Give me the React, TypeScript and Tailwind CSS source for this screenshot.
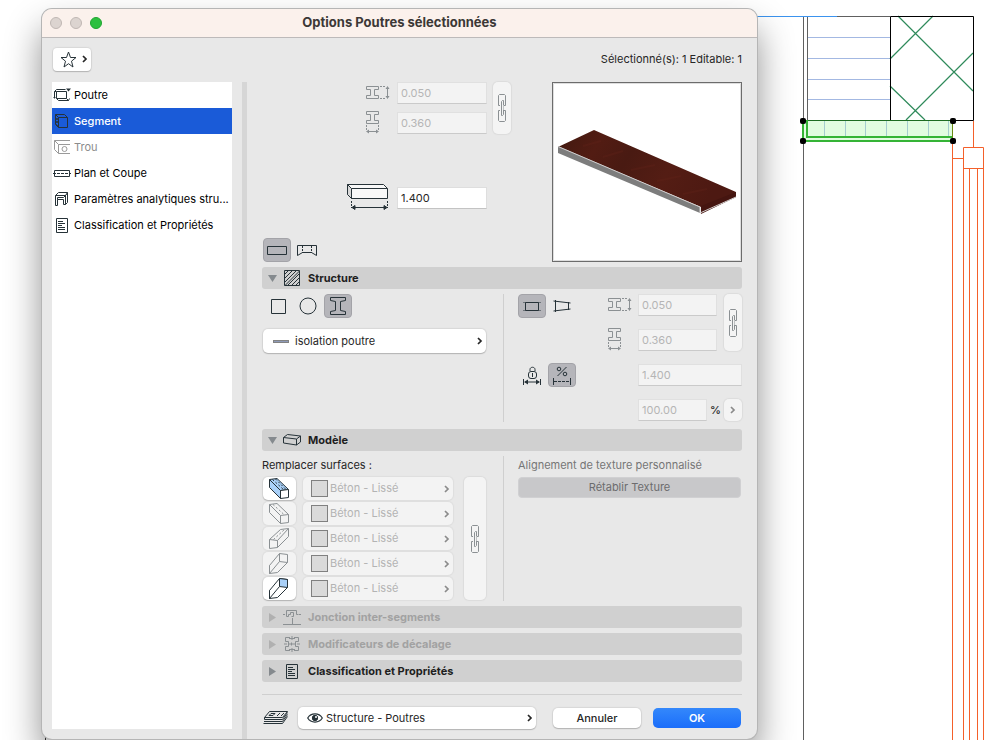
import type { ReactNode } from "react";

type IconProps = { w: number; h: number; className?: string; children: ReactNode };

function Icon({ w, h, className = "text-[#263238]", children }: IconProps) {
  return (
    <svg
      width={w}
      height={h}
      viewBox={`0 0 ${w} ${h}`}
      fill="none"
      stroke="currentColor"
      className={`shrink-0 ${className}`}
      aria-hidden="true"
    >
      {children}
    </svg>
  );
}

const muted = "text-[#8b9093]";

/* Sidebar icons */
const beamIcon = (
  <Icon w={18} h={14}>
    <path d="M1.500 10.500v-7l2-2h9M3.500 3.500h10v7h-10zM1.500 3.500h2M.5 9.500h2M3.500 10.500l2 2h10l1-2M13.500 10.500l2 2" />
    <path d="M13 .5h5l-2.500 3z" fill="currentColor" stroke="none" />
  </Icon>
);

const segmentIcon = (
  <Icon w={18} h={14}>
    <path d="M2.500 .5h9l3 3v10h-9l-3-3zM2.500 .5l3 3h9M5.500 3.500v10" />
    <path d="M3 4l2 2M3 7l2 2M3 10l2 2M3 6l2-2M3 9l2-2" strokeWidth=".8" />
  </Icon>
);

const holeIcon = (
  <Icon w={18} h={14} className="text-[#9a9a9a]">
    <path d="M17 .5H1.500v9l4 4H17M1.500 .5l4 4v9M5.500 4.500H17" />
    <circle cx="11.500" cy="9" r="2.500" />
  </Icon>
);

const planIcon = (
  <Icon w={18} h={14}>
    <path d="M1.500 4.500h15v6h-15z" />
    <path d="M0 7.500h18" strokeDasharray="3 1" />
  </Icon>
);

const frameIcon = (
  <Icon w={18} h={14}>
    <path d="M2.500 13.500v-10l3-3h9v10l-2 2v-9h-10M4.500 13.500v-6h6v5h2M4.500 5.500h6l3-3M2.500 13.500h2M14.500 .5l-2 3M4.500 7.500v-2" />
  </Icon>
);

const documentIcon = (
  <Icon w={18} h={15}>
    <path d="M3.500 .5h11v14h-11zM5 3.500h5M5 5.500h7M5 7.500h4M5 9.500h7M5 11.500h7" />
  </Icon>
);

/* Profile dimension icons */
function ProfileHeightIcon() {
  return (
    <Icon w={24} h={16} className={muted}>
      <path d="M.5 1.500h12v3h-4v6h4v3H.5v-3h4v-6h-4z" />
      <path d="M14 1.500h6M14 13.500h6" strokeDasharray="2 1" />
      <path d="M21.500 3v9" />
      <path d="M21.500 1l2 3h-4zM21.500 14l2-3h-4z" fill="currentColor" stroke="none" />
    </Icon>
  );
}

function ProfileWidthIcon() {
  return (
    <Icon w={24} h={24} className={muted}>
      <path d="M.5 .5h12v3h-4v6h4v3H.5v-3h4v-6h-4z" />
      <path d="M.5 14v6M12.500 14v6" strokeDasharray="2 1" />
      <path d="M2 20.500h9" />
      <path d="M0 20.500l3-2v4zM13 20.500l-3-2v4z" fill="currentColor" stroke="none" />
    </Icon>
  );
}

function BeamLengthIcon() {
  return (
    <Icon w={42} h={27}>
      <path d="M.5 .5h36l4 4v10h-36l-4-4z" fill="#f8f8f8" />
      <path d="M.5 .5l4 4h36M4.500 4.500v10" />
      <path d="M.5 .5l4 4v10l-4-4z" fill="#d8d8d8" />
      <path d="M4.500 17v7M40.500 17v7" strokeDasharray="2 1" />
      <path d="M6 23.500h33" />
      <path d="M5 23.500l3-2v4zM40 23.500l-3-2v4z" fill="currentColor" />
    </Icon>
  );
}

function ChainIcon() {
  return (
    <Icon w={8} h={28} className={muted}>
      <path d="M2 11.500H.5v-10l1-1h5l1 1v10H6M2 16.500H.5v10l1 1h5l1-1v-10H6" />
      <path d="M3.500 12V7.500l1-1h1v5M3.500 16.500v5h1l1-1V16M3.500 9v10" />
      <path d="M5.500 12.500v3" strokeDasharray="1 1" />
    </Icon>
  );
}

function Chevron({ className = "text-[#262626]" }: { className?: string }) {
  return (
    <Icon w={6} h={8} className={`pointer-events-none ${className}`}>
      <path d="M1 1l3 3-3 3" strokeWidth="1.700" />
    </Icon>
  );
}

/* Surface icons: highlighted face is blue when the override is active */
const surfaceIcons = [
  <Icon w={21} h={21} key="top">
    <path d="M.5 1.500L8 .5l11.500 11-8 1v8L.5 9.500z" fill="#a9d0f8" />
    <path d="M11.500 12.500l8-1v8l-8 1z" fill="#fff" />
    <path d="M.5 1.500l11 11" />
    <path d="M3.500 1.500l11 10M6.500 1l10 10" strokeDasharray="2 2" />
  </Icon>,
  <Icon w={21} h={21} key="left" className={muted}>
    <path d="M.5 1.500L8 .5l11.500 11v8l-8 1L.5 9.500zM.5 1.500l11 11v8M11.500 12.500l8-1" />
    <path d="M4 1.500l11 10" strokeDasharray="2 2" />
  </Icon>,
  <Icon w={21} h={21} key="right" className={muted}>
    <path d="M.5 11.500l11-10 8-1v8l-11 11-8 1zM.5 11.500l8 1v7M8.500 12.500l11-12" />
    <path d="M4.500 11.500l11-10" strokeDasharray="2 2" />
  </Icon>,
  <Icon w={21} h={21} key="end" className={muted}>
    <path d="M.5 12.500l10-12 8 1v8l-10 10-8 1zM10.500 .5v8l8 1M10.500 8.500l-10 12M.5 12.500v8" />
  </Icon>,
  <Icon w={21} h={21} key="bottom">
    <path d="M.5 12.500l10-12 8 1v8l-10 10-8 1z" fill="#fff" />
    <path d="M10.500 .5l8 1v8l-8-1z" fill="#a9d0f8" />
    <path d="M10.500 8.500l-10 12v-8" />
  </Icon>,
];

/* Form pieces */
function NumberField({ label, value, className, disabled = true }: { label: string; value: string; className: string; disabled?: boolean }) {
  return (
    <input
      type="text"
      aria-label={label}
      defaultValue={value}
      disabled={disabled}
      className={`h-[22px] border border-[#dedede] border-b-[#c3c3c3] bg-white px-[3px] text-[11px] text-[#262626] disabled:border-[#e0e0e0] disabled:border-b-[#cacaca] disabled:bg-[#f3f3f3] disabled:text-[#b5b5b5] ${className}`}
    />
  );
}

function LinkButton({ label, className }: { label: string; className: string }) {
  return (
    <button
      type="button"
      aria-label={label}
      disabled
      className={`flex items-center justify-center rounded-[5px] bg-[#f4f4f4] shadow-[0_0_1px_1px_#dcdcdc] ${className}`}
    >
      <ChainIcon />
    </button>
  );
}

function Toggle({ label, on, className = "w-7", children }: { label: string; on?: boolean; className?: string; children: ReactNode }) {
  return (
    <button
      type="button"
      aria-label={label}
      aria-pressed={!!on}
      className={`flex h-6 items-center justify-center rounded-[4px] ${on ? "border border-[#a3a3a8] bg-[#b5b5ba]" : ""} ${className}`}
    >
      {children}
    </button>
  );
}

function Picker({ label, value, lead, disabled, className }: { label: string; value: string; lead?: ReactNode; disabled?: boolean; className: string }) {
  return (
    <div
      className={`flex items-center rounded-[5px] ${
        disabled
          ? "bg-[#f3f3f3] pr-[3px] text-[#b3b3b3] shadow-[0_0_1px_1px_#dedede]"
          : "bg-white pr-[3px] text-[#262626] shadow-[0_1px_1px_#b4b4b4,0_0_1px_1px_#d8d8d8]"
      } ${className}`}
    >
      {lead}
      <select aria-label={label} disabled={disabled} className="min-w-0 flex-1 appearance-none bg-transparent text-[11px] opacity-100 outline-none">
        <option>{value}</option>
      </select>
      <Chevron className={disabled ? "text-[#8b8b8b]" : "text-[#262626]"} />
    </div>
  );
}

function SectionHeader({ title, icon, open, disabled }: { title: string; icon: ReactNode; open?: boolean; disabled?: boolean }) {
  return (
    <h2>
      <button
        type="button"
        aria-expanded={!!open}
        disabled={disabled}
        className={`flex h-[22px] w-full items-center rounded-[3px] bg-[#d0d0d0] pl-[6px] text-[11px] font-bold ${disabled ? "text-[#a2a2a2]" : "text-[#1e1e1e]"}`}
      >
        <Icon w={9} h={9} className={disabled ? "text-[#b0b0b0]" : "text-[#858a8e]"}>
          <path d={open ? "M0 1h9L4.500 8z" : "M1 0v9l7-4.500z"} fill="currentColor" stroke="none" />
        </Icon>
        <span className="mr-[7px] ml-[6px] flex w-[18px] justify-center">{icon}</span>
        {title}
      </button>
    </h2>
  );
}

const pages = [
  { name: "Poutre", icon: beamIcon },
  { name: "Segment", icon: segmentIcon },
  { name: "Trou", icon: holeIcon },
  { name: "Plan et Coupe", icon: planIcon },
  { name: "Paramètres analytiques stru...", icon: frameIcon },
  { name: "Classification et Propriétés", icon: documentIcon },
];

function Sidebar() {
  return (
    <nav className="mb-[10px] w-[180px] shrink-0 bg-white">
      <ul>
        {pages.map(({ name, icon }) => (
          <li key={name}>
            <button
              type="button"
              disabled={name === "Trou"}
              aria-current={name === "Segment" ? "page" : undefined}
              className="flex h-[26px] w-full items-center gap-[3px] pl-px text-left text-[11px] whitespace-nowrap text-black disabled:text-[#8c8c8c] aria-[current=page]:bg-[#1a5bd8] aria-[current=page]:font-medium aria-[current=page]:text-white"
            >
              {icon}
              {name}
            </button>
          </li>
        ))}
      </ul>
    </nav>
  );
}

function Preview() {
  return (
    <div className="h-[180px] w-[190px] shrink-0 border border-[#6c6c6c] bg-white">
      <svg width="188" height="178" viewBox="0 0 188 178" role="img" aria-label="Aperçu 3D">
        <defs>
          <linearGradient id="wood" x1="0" y1="0" x2="1" y2="0.300">
            <stop offset="0" stopColor="#41190f" />
            <stop offset=".25" stopColor="#521c13" />
            <stop offset=".45" stopColor="#491a12" />
            <stop offset=".7" stopColor="#541d14" />
            <stop offset="1" stopColor="#4d1912" />
          </linearGradient>
        </defs>
        <path d="M.5.5h187v177H.5z" fill="none" stroke="#dedede" />
        <path d="M5 64L41 47l142 62v5l-35 17v-7z" fill="url(#wood)" />
        <path d="M148 123l35-14v5l-35 16z" fill="#451510" />
        <path d="M5 63l142 61v6L5 70z" fill="#7d7d7d" />
        <path d="M5 63.500l142 60.500v6l36-16" fill="none" stroke="#d2cfcf" />
        <path d="M50 74l20-6M78 87l24-5M104 98l24-5M130 111l24-5M30 63l18-5" stroke="#64241a" strokeWidth="2" opacity=".3" />
      </svg>
    </div>
  );
}

function Geometry() {
  return (
    <section className="flex h-[185px]">
      <div className="flex h-[180px] flex-1 flex-col">
        <div className="flex justify-end gap-[6px] pr-[41px]">
          <div className="flex flex-col gap-2">
            <div className="flex h-[22px] items-center gap-[7px]">
              <ProfileHeightIcon />
              <NumberField label="Hauteur" value="0.050" className="w-[90px]" />
            </div>
            <div className="flex h-[22px] items-center gap-[7px]">
              <ProfileWidthIcon />
              <NumberField label="Largeur" value="0.360" className="w-[90px]" />
            </div>
          </div>
          <LinkButton label="Lier hauteur et largeur" className="w-[18px]" />
        </div>
        <div className="mt-[50px] flex items-center justify-end gap-2 pr-[65px]">
          <BeamLengthIcon />
          <NumberField label="Longueur" value="1.400" className="w-[90px]" disabled={false} />
        </div>
        <div className="mt-auto flex gap-0.5 pl-px">
          <Toggle label="Section uniforme" on>
            <Icon w={20} h={9}>
              <path d="M.5 .5h19v8H.5z" />
            </Icon>
          </Toggle>
          <Toggle label="Section variable">
            <Icon w={20} h={11}>
              <path d="M.5 10.500V.5h19v10M.5 10.500l5-3h9l5 3" />
              <path d="M5.500 1v7M14.500 1v7" strokeDasharray="2 1" />
            </Icon>
          </Toggle>
        </div>
      </div>
      <Preview />
    </section>
  );
}

function Structure() {
  return (
    <div className="flex h-[140px] pt-[5px] pb-[7px]">
      <div className="flex-1 border-r border-[#cfcfcf] pr-[17px]">
        <div className="flex gap-0.5 pl-[2px]">
          <Toggle label="Rectangulaire">
            <Icon w={15} h={15}>
              <path d="M.5 .5h14v14H.5z" />
            </Icon>
          </Toggle>
          <Toggle label="Circulaire">
            <Icon w={18} h={18}>
              <circle cx="9" cy="9" r="8" />
            </Icon>
          </Toggle>
          <Toggle label="Profil complexe" on>
            <Icon w={16} h={18}>
              <path d="M.5 .5h15v3l-5 1v9l5 1v3H.5v-3l5-1v-9l-5-1z" />
            </Icon>
          </Toggle>
        </div>
        <Picker
          label="Profil"
          value="isolation poutre"
          className="mt-[11px] ml-px h-6"
          lead={<span className="mr-[6px] ml-[10px] h-[3px] w-4 border border-[#828282] bg-[#8e9ab8]" />}
        />
      </div>
      <div className="flex w-[238px] shrink-0 justify-between pl-[14px]">
        <div className="flex flex-col gap-[45px]">
          <div className="flex gap-0.5">
            <Toggle label="Segment constant" on>
              <Icon w={18} h={11}>
                <path d="M2.500 1.500h13v8h-13z" />
                <path d="M0 1.500h18M0 9.500h18" opacity=".5" />
              </Icon>
            </Toggle>
            <Toggle label="Segment effilé">
              <Icon w={18} h={12}>
                <path d="M2.500 0v12M15.500 2v8M.5 1l17 2M.5 11l17-2" />
              </Icon>
            </Toggle>
          </div>
          <div className="flex gap-0.5">
            <Toggle label="Longueur fixe">
              <Icon w={18} h={19}>
                <path d="M7 5V3.500C7 .5 12 .5 12 3.500V5M9.500 7v4" />
                <rect x="5.500" y="5.500" width="8" height="7" rx="2.500" />
                <path d="M.5 13v6M17.500 13v6M2 16h14" />
                <path d="M1 16l4-2.500v5zM17 16l-4-2.500v5z" fill="currentColor" stroke="none" />
              </Icon>
            </Toggle>
            <Toggle label="Longueur proportionnelle" on>
              <Icon w={18} h={19}>
                <path d="M13.500 1l-9 9" />
                <circle cx="6" cy="3" r="1.800" />
                <circle cx="12" cy="8" r="1.800" />
                <path d="M.5 12v7M17.500 12v7" />
                <path d="M1 15.500h16" strokeDasharray="3 1" />
              </Icon>
            </Toggle>
          </div>
        </div>
        <div className="flex flex-col items-end gap-[13px]">
          <div className="flex gap-[7px]">
            <div className="flex flex-col gap-[13px]">
              <div className="flex h-[22px] items-center gap-[6px]">
                <ProfileHeightIcon />
                <NumberField label="Hauteur du segment" value="0.050" className="w-[79px]" />
              </div>
              <div className="flex h-[22px] items-center gap-[6px]">
                <ProfileWidthIcon />
                <NumberField label="Largeur du segment" value="0.360" className="w-[79px]" />
              </div>
            </div>
            <LinkButton label="Lier les dimensions du segment" className="w-[18px]" />
          </div>
          <NumberField label="Longueur du segment" value="1.400" className="w-[104px]" />
          <div className="flex h-[22px] items-center">
            <NumberField label="Pourcentage" value="100.00" className="w-[69px]" />
            <span className="w-[17px] text-center text-[11px] font-medium">%</span>
            <button
              type="button"
              disabled
              aria-label="Autres unités"
              className="flex h-[22px] w-[18px] items-center justify-center rounded-[5px] bg-[#f4f4f4] shadow-[0_0_1px_1px_#dcdcdc]"
            >
              <Chevron className="text-[#8b8b8b]" />
            </button>
          </div>
        </div>
      </div>
    </div>
  );
}

const surfaces = ["Dessus", "Gauche", "Droite", "Extrémité", "Dessous"];

function Model() {
  return (
    <div className="flex h-[155px] pt-[5px] pb-[5px]">
      <div className="flex-1 border-r border-[#cfcfcf] pr-[17px]">
        <p className="h-[21px] text-[11px] leading-[18px]">Remplacer surfaces :</p>
        <div className="flex gap-[11px] pl-px">
          <div className="flex flex-1 flex-col gap-[2px]">
            {surfaces.map((surface, index) => {
              const active = index === 0 || index === 4;
              return (
                <div key={surface} className="flex h-[23px] gap-[7px]">
                  <button
                    type="button"
                    aria-label={surface}
                    aria-pressed={active}
                    className={`flex w-[33px] items-center justify-center rounded-[5px] ${
                      active ? "bg-white shadow-[0_1px_1px_#b4b4b4,0_0_1px_1px_#d8d8d8]" : "bg-[#f3f3f3] shadow-[0_0_1px_1px_#dedede]"
                    }`}
                  >
                    {surfaceIcons[index]}
                  </button>
                  <Picker
                    label={`Surface ${surface}`}
                    value="Béton - Lissé"
                    disabled
                    className="h-[23px] flex-1"
                    lead={<span className="mr-[2px] ml-2 h-[17px] w-[17px] border border-[#808080] bg-[#dadada]" />}
                  />
                </div>
              );
            })}
          </div>
          <LinkButton label="Lier les surfaces" className="w-[22px]" />
        </div>
      </div>
      <div className="flex w-[238px] shrink-0 flex-col pr-px pl-[14px]">
        <p className="h-[21px] text-[11px] leading-[18px] text-[#767676]">Alignement de texture personnalisé</p>
        <button type="button" disabled className="h-[21px] rounded-[4px] border border-[#d0d0d2] bg-[#c8c8ca] text-[11px] text-[#6c6c6e]">
          Rétablir Texture
        </button>
      </div>
    </div>
  );
}

function Footer() {
  return (
    <footer className="mt-3 flex items-center border-t border-[#cfcfcf] pt-3">
      <Icon w={28} h={16}>
        <path d="M7.500 1.500h18l-5 6h-18zM2.500 7.500v2h18l5-7M2 11.500h18.500l5-7M1.500 13.500h19l5-7M9 3.500h4l-2 2H7zM18 3l-3 3M22 3l-3 3" />
      </Icon>
      <Picker
        label="Calque"
        value="Structure - Poutres"
        className="ml-2 h-[22px] flex-1"
        lead={
          <span className="mr-[3px] ml-[9px]">
            <Icon w={16} h={10}>
              <path d="M.7 5C4-.4 12-.4 15.300 5 12 10.400 4 10.400 .7 5z" strokeWidth="1.200" />
              <circle cx="8" cy="5" r="2.700" fill="currentColor" />
              <circle cx="9" cy="4" r="1" fill="#fff" stroke="none" />
            </Icon>
          </span>
        }
      />
      <button
        type="button"
        className="ml-[17px] h-5 w-[88px] rounded-[5px] bg-white text-[11px] font-medium text-[#262626] shadow-[0_1px_1px_#b4b4b4,0_0_1px_1px_#d8d8d8]"
      >
        Annuler
      </button>
      <button type="button" className="mr-px ml-3 h-5 w-[88px] rounded-[5px] bg-linear-to-b from-[#3488fb] to-[#1b6dfa] text-[11px] font-semibold text-white">
        OK
      </button>
    </footer>
  );
}

/* Plan drawing behind the dialog */
function Drawing() {
  return (
    <svg width="1007" height="740" viewBox="0 0 1007 740" fill="none" className="absolute top-0 left-0" aria-hidden="true">
      <path d="M837 16.500h53M803.500 16v724M807.500 16v105" stroke="#606060" />
      <path d="M700 16.500h137" stroke="#3b93ee" />
      <path d="M808 37.500h82M808 58.500h82M808 79.500h82M808 99.500h82" stroke="#a3b8e2" />
      <path d="M898 16l75 75M933 16l-43 43M973 53l-67 67M890 86l35 34" stroke="#2f8a5b" strokeWidth="1.200" />
      <path d="M803 120h150v21H803z" fill="#e1fce1" />
      <path d="M824.500 121v16M845.500 121v16M865.500 121v16M886.500 121v16M907.500 121v16M928.500 121v16M948.500 121v16" stroke="#a4cdd0" />
      <path d="M890.500 16.500h83v104h-83z" stroke="#000" />
      <path d="M803 120.500h150" stroke="#1c6b22" />
      <path d="M803 120v21M807 120v17h146M803 141h150" stroke="#35b436" strokeWidth="2" />
      <path d="M952.500 121v20" stroke="#6b8a12" />
      <path
        d="M952.500 141v599M952 158.500h11M973.500 121v26M963.500 147.500h20v21h-20zM963.500 168v572M969.500 168v572M977.500 168v572M983.500 168v572"
        stroke="#f4602a"
      />
      {[
        [803, 121],
        [953, 121],
        [803, 141],
        [953, 141],
      ].map(([x, y]) => (
        <rect key={`${x}-${y}`} x={x - 3} y={y - 3} width="6" height="6" rx="2" fill="#000" />
      ))}
      <path d="M45.500 730v10" stroke="#333" />
    </svg>
  );
}

export default function App() {
  return (
    <main className="relative min-h-screen overflow-hidden bg-white pt-[9px] pr-[250px] pl-[42px] font-[Inter,'Liberation_Sans',sans-serif] text-[#262626]">
      <Drawing />
      <div
        role="dialog"
        aria-labelledby="dialog-title"
        className="relative min-w-[715px] overflow-hidden rounded-[10px] bg-[#e8e8e8] shadow-[0_0_0_1px_#b5b5b5,0_20px_36px_rgba(0,0,0,0.45)]"
      >
        <header className="flex h-[29px] items-center border-b border-[#bdbaba] bg-[#fbf1ec] pl-2">
          <div className="flex w-[60px] gap-2">
            <button type="button" aria-label="Fermer" className="size-3 rounded-full border border-[#bfb7b3] bg-[#dcd4d0]" />
            <button type="button" aria-label="Réduire" className="size-3 rounded-full border border-[#bfb7b3] bg-[#dcd4d0]" />
            <button type="button" aria-label="Agrandir" className="size-3 rounded-full border border-[#1ea52f] bg-[#2dc040]" />
          </div>
          <h1 id="dialog-title" className="flex-1 pr-[68px] text-center text-[13px] font-bold text-[#3c3836]">
            Options Poutres sélectionnées
          </h1>
        </header>

        <div className="flex h-11 items-center justify-between pr-[15px] pb-[2px] pl-[11px]">
          <button
            type="button"
            aria-label="Favoris"
            className="flex h-[23px] w-[38px] items-center justify-between rounded-[4px] bg-white pr-[3px] pl-[7px] shadow-[0_1px_1px_#b4b4b4,0_0_1px_1px_#d8d8d8]"
          >
            <Icon w={17} h={17}>
              <path d="M8.500 1l2 5.500H16l-4.500 3.700 1.500 5.800-4.500-3.300L4 16l1.500-5.800L1 6.500h5.500z" />
            </Icon>
            <Chevron />
          </button>
          <p className="text-[11px]">Sélectionné(s): 1 Editable: 1</p>
        </div>

        <div className="flex pl-[10px]">
          <Sidebar />
          <div className="ml-[10px] w-[5px] shrink-0 bg-[#d6d6d6]" />
          <div className="min-w-0 flex-1 pr-[15px] pb-[10px] pl-[15px]">
            <Geometry />
            <SectionHeader
              title="Structure"
              open
              icon={
                <Icon w={16} h={16}>
                  <path d="M.5 .5h15v15H.5zM1 4l3-3M1 8l7-7M1 12l11-11M1 15.500L15.500 1M4 15l11-11M8 15l7-7M12 15l3-3" />
                </Icon>
              }
            />
            <Structure />
            <SectionHeader
              title="Modèle"
              open
              icon={
                <Icon w={18} h={12}>
                  <path d="M.5 3.500l4-3 13 1.500v6l-4 3-13-2zM.5 3.500l13 1.500v6M13.500 5l4-3" />
                </Icon>
              }
            />
            <Model />
            <div className="flex flex-col gap-[5px]">
              <SectionHeader
                title="Jonction inter-segments"
                disabled
                icon={
                  <Icon w={18} h={16} className={muted}>
                    <path d="M0 5.500h2M16 5.500h2M7.500 5.500h-2v2h-2v-6h10v4h2M7.500 5.500v-2h3v4h-2M9.500 9v6M0 15.500h18" />
                  </Icon>
                }
              />
              <SectionHeader
                title="Modificateurs de décalage"
                disabled
                icon={
                  <Icon w={16} h={16} className={muted}>
                    <path d="M6 1.500H1.500v4h3v5h-3v4H6M10 1.500h4.500v4h-3v5h3v4H10M8 0v4M8 12v4M5 2.500h6M5 13.500h6M0 8h3M13 8h3M5 8h6M7.500 6.500v3" />
                  </Icon>
                }
              />
              <SectionHeader title="Classification et Propriétés" icon={documentIcon} />
            </div>
            <Footer />
          </div>
        </div>
      </div>
    </main>
  );
}
